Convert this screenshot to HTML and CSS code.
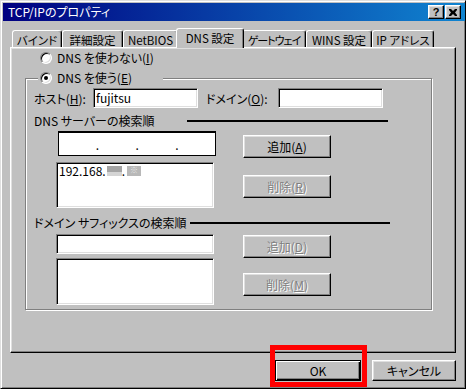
FILE: index.html
```html
<!DOCTYPE html>
<html>
<head>
<meta charset="utf-8">
<title>TCP/IPのプロパティ</title>
<link rel="stylesheet" href="styles.css">
</head>
<body>
	<div class="window">
		<div class="titlebar">
			<span class="title">TCP/IPのプロパティ</span>
			<div class="title_btns">
				<span class="tbtn">?</span>
				<span class="tbtn">
					<svg width="8" height="7" viewBox="0 0 8 7"><path d="M0 0h2l2 2 2-2h2v1L6 3.5 8 6v1H6L4 5 2 7H0V6l2-2.5L0 1z" fill="#000"/></svg>
				</span>
			</div>
		</div>
		<div class="main">
			<div class="tabs">
				<div class="tab">バインド</div>
				<div class="tab">詳細設定</div>
				<div class="tab">NetBIOS</div>
				<div class="tab active">DNS 設定</div>
				<div class="tab">ゲートウェイ</div>
				<div class="tab">WINS 設定</div>
				<div class="tab">IP アドレス</div>
			</div>
			<div class="panel">
				<div class="radio first"><span class="circle"></span><span>DNS を使わない(<u>I</u>)</span></div>
				<div class="group">
					<div class="radio legend"><span class="circle on"></span><span>DNS を使う(<u>E</u>)</span></div>
					<div class="host_row">
						<span class="lbl_host">ホスト(<u>H</u>):</span>
						<div class="field text">fujitsu</div>
						<span class="lbl_domain">ドメイン(<u>O</u>):</span>
						<div class="field text"></div>
					</div>
					<div class="section">
						<span class="caption">DNS サーバーの検索順</span>
						<span class="rule"></span>
					</div>
					<div class="pair">
						<div class="ip">
							<span class="dot">.</span>
							<span class="dot">.</span>
							<span class="dot">.</span>
						</div>
						<div class="btn btn_a"><span>追加(<u>A</u>)</span></div>
						<div class="field list list_dns">
							<div class="entry">192.168.<span class="mask m1"></span>.<span class="mask m2">※</span></div>
						</div>
						<div class="btn disabled btn_r"><span>削除(<u>R</u>)</span></div>
					</div>
					<div class="section second">
						<span class="caption">ドメイン サフィックスの検索順</span>
						<span class="rule"></span>
					</div>
					<div class="pair">
						<div class="field suffix"></div>
						<div class="btn disabled btn_d"><span>追加(<u>D</u>)</span></div>
						<div class="field list list_suffix"></div>
						<div class="btn disabled btn_m"><span>削除(<u>M</u>)</span></div>
					</div>
				</div>
			</div>
			<div class="actions">
				<div class="ok_wrap"><div class="btn default">OK</div></div>
				<div class="btn cancel">キャンセル</div>
			</div>
		</div>
	</div>
</body>
</html>
```
FILE: styles.css
```css
* {
	box-sizing: border-box;
}

body {
	margin: 0;
	background: #c0c0c0;
	color: #000;
	font-family: "Noto Sans CJK JP", "Liberation Sans", sans-serif;
	font-size: 12px;
	font-feature-settings: "palt";
}

.window {
	width: 466px;
	height: 389px;
	display: flex;
	flex-direction: column;
	padding: 2px 0 2px 2px;
	border: 1px solid;
	border-color: #dfdfdf #000 #000 #dfdfdf;
	box-shadow: inset 1px 1px #fff, inset -1px -1px #808080;
}

/* title bar */
.titlebar {
	height: 18px;
	display: flex;
	align-items: center;
	padding: 0 4px 0 5px;
	background: linear-gradient(to right, #000080, #1084d0);
	color: #fff;
}

.title {
	flex: 1;
	line-height: 18px;
	white-space: nowrap;
}

.title_btns {
	display: flex;
	gap: 1px;
}

.tbtn {
	width: 16px;
	height: 14px;
	display: flex;
	align-items: center;
	justify-content: center;
	background: #c0c0c0;
	color: #000;
	font-family: "Liberation Sans", sans-serif;
	font-size: 11px;
	font-weight: bold;
	line-height: 1;
	border: 1px solid;
	border-color: #fff #000 #000 #fff;
	box-shadow: inset -1px -1px #808080, inset 1px 1px #dfdfdf;
}

.main {
	flex: 1;
	padding: 0 9px 0 7px;
}

/* tabs */
.tabs {
	height: 26px;
	display: flex;
	align-items: flex-end;
	padding-left: 2px;
	font-size: 11.5px;
}

.tab {
	height: 17px;
	display: flex;
	align-items: center;
	justify-content: center;
	white-space: nowrap;
	line-height: 12px;
	padding-top: 1px;
	border: 1px solid;
	border-bottom: 0;
	border-color: #fff #000 #000 #fff;
	border-radius: 3px 3px 0 0;
	box-shadow: inset -1px 0 #808080;
}

.tab:nth-child(1) { width: 50px; }
.tab:nth-child(2) { width: 61px; }
.tab:nth-child(3) { width: 55px; }
.tab:nth-child(4) { width: 64px; }
.tab:nth-child(5) { width: 64px; font-size: 11px; letter-spacing: -1px; }
.tab:nth-child(6) { width: 66px; }
.tab:nth-child(7) { width: 62px; }

.tab.active {
	position: relative;
	z-index: 1;
	width: 68px;
	height: 20px;
	margin: 0 -2px -1px;
	padding-top: 0;
	padding-bottom: 2px;
	background: #c0c0c0;
}

/* panel */
.panel {
	height: 306px;
	padding: 4px 0 0 14px;
	border: 1px solid;
	border-color: #fff #000 #000 #fff;
	box-shadow: inset -1px -1px #808080, inset 1px 1px #dfdfdf;
}

.radio {
	height: 12px;
	display: flex;
	align-items: center;
	gap: 5px;
	line-height: 12px;
	white-space: nowrap;
}

.radio.first {
	margin-left: 15px;
}

.circle {
	width: 12px;
	height: 12px;
	display: flex;
	align-items: center;
	justify-content: center;
	border-radius: 50%;
	background: #fff;
	border: 1px solid;
	border-color: #808080 #fff #fff #808080;
	box-shadow: inset 1px 1px #000, inset -1px -1px #dfdfdf;
}

.circle.on::after {
	content: "";
	width: 4px;
	height: 4px;
	border-radius: 50%;
	background: #000;
}

.group {
	width: 407px;
	margin-top: 14px;
	padding: 0 0 4px 8px;
	border: 1px solid #808080;
	box-shadow: inset 1px 1px #fff, 1px 1px #fff;
}

.legend {
	width: 125px;
	margin: -7px 0 0 4px;
	padding-left: 2px;
	background: #c0c0c0;
}

.host_row {
	display: flex;
	align-items: center;
	margin-top: 4px;
	white-space: nowrap;
}

.lbl_host {
	width: 59px;
}

.lbl_domain {
	width: 72px;
	margin-left: 8px;
}

.field {
	background: #fff;
	border: 1px solid;
	border-color: #808080 #fff #fff #808080;
	box-shadow: inset 1px 1px #000, inset -1px -1px #dfdfdf;
}

.field.text {
	width: 105px;
	height: 20px;
	padding: 1px 2px 0;
	line-height: 16px;
}

.section {
	height: 14px;
	display: flex;
	align-items: center;
	margin-top: 6px;
	line-height: 14px;
	white-space: nowrap;
}

.section .caption {
	width: 153px;
}

.section .rule {
	width: 201px;
	height: 2px;
	background: #000;
}

.section.second {
	margin-top: 8px;
}

.section.second .caption {
	width: 156px;
}

.section.second .rule {
	width: 200px;
}

.pair {
	display: grid;
	grid-template-columns: 160px 88px;
	column-gap: 27px;
	align-items: start;
	margin-left: 22px;
}

.ip {
	width: 158px;
	height: 25px;
	margin: 3px 0 0 2px;
	display: flex;
	align-items: center;
	justify-content: space-evenly;
	background: #fff;
	border: 1px solid #000;
	box-shadow: inset 0 1px #000;
}

.dot {
	width: 3px;
	line-height: 12px;
	margin-top: 3px;
	text-align: center;
}

.list {
	width: 158px;
	padding: 1px 2px;
}

.list_dns {
	height: 46px;
	margin-top: 4px;
}

.list_suffix {
	height: 47px;
}

.suffix {
	width: 158px;
	height: 20px;
	margin-top: 4px;
}

.entry {
	display: flex;
	align-items: center;
	line-height: 12px;
	margin-top: 1px;
}

.mask {
	display: inline-block;
	height: 10px;
}

.mask.m1 {
	width: 15px;
	margin-left: 1px;
	background: linear-gradient(#a4a4a4 0, #a4a4a4 55%, #d4d4d4 55%);
}

.mask.m2 {
	width: 14px;
	margin-left: 2px;
	background: #b8b8b8;
	color: #e8e8e8;
	font-size: 8px;
	line-height: 8px;
	padding-left: 3px;
}

/* buttons */
.btn {
	width: 88px;
	height: 23px;
	display: flex;
	align-items: center;
	justify-content: center;
	line-height: 12px;
	white-space: nowrap;
	background: #c0c0c0;
	border: 1px solid;
	border-color: #fff #000 #000 #fff;
	box-shadow: inset -1px -1px #808080, inset 1px 1px #dfdfdf;
	user-select: none;
}

.btn.disabled {
	color: #808080;
	text-shadow: 1px 1px 0 #fff;
}

.btn_a { margin-top: 7px; }
.btn_r { margin-top: 17px; }
.btn_d { margin-top: 5px; }
.btn_m { margin-top: 15px; }

.actions {
	display: flex;
	justify-content: flex-end;
	gap: 11px;
	margin-top: 7px;
}

.ok_wrap {
	position: relative;
	display: flex;
}

.ok_wrap::after {
	content: "";
	position: absolute;
	left: -5px;
	right: -6px;
	top: -15px;
	bottom: -6px;
	border: 5px solid #f00;
}

.btn.default {
	width: 86px;
	height: 21px;
	border: 1px solid #000;
	box-shadow: inset 1px 1px #fff, inset -1px -1px #000, inset -2px -2px #808080;
}

.btn.cancel {
	width: 84px;
	height: 21px;
}
```
